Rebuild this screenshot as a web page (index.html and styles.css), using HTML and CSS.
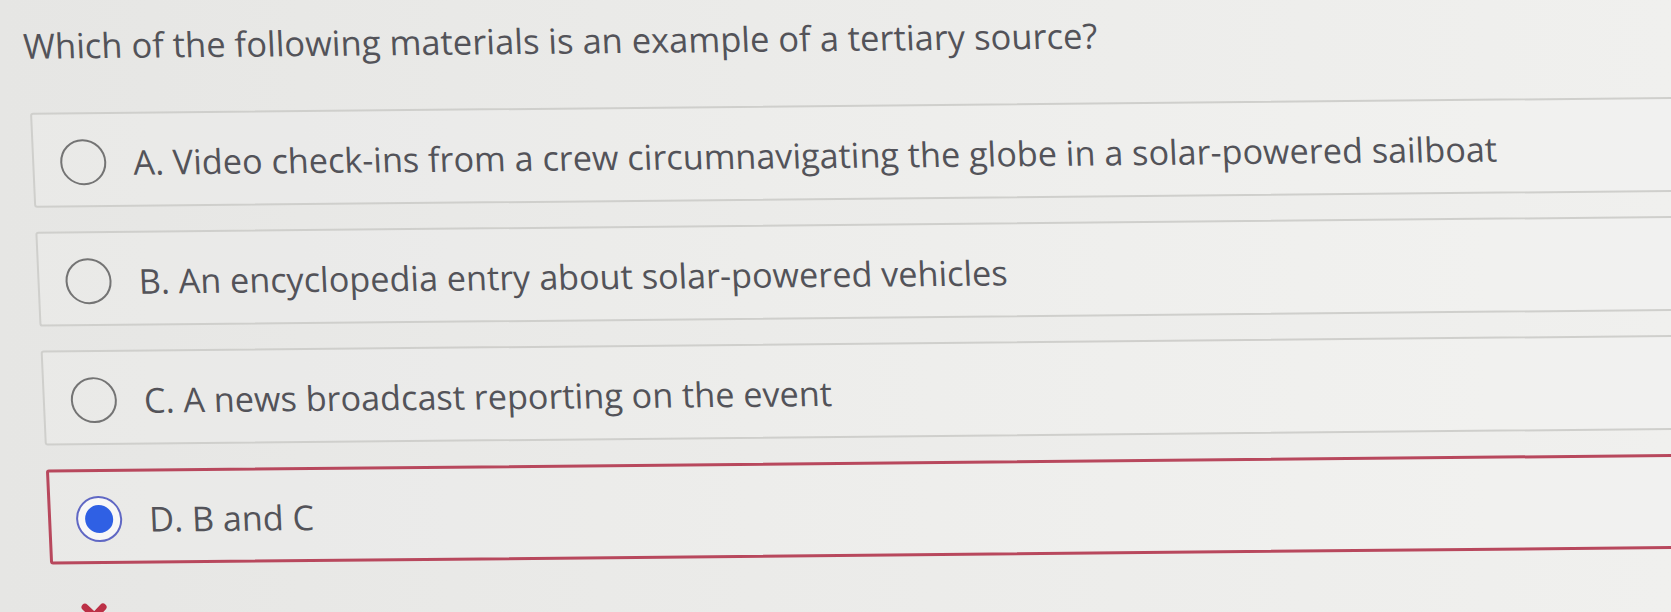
FILE: index.html
```html
<!DOCTYPE html>
<html lang="en">
<head>
<meta charset="utf-8">
<title>Question</title>
<link rel="stylesheet" href="styles.css">
</head>
<body>
<main class="page">
  <h1 class="question">Which of the following materials is an example of a tertiary source?</h1>
  <ul class="options">
    <li class="option">
      <span class="radio"></span>
      <span class="label">A. Video check-ins from a crew circumnavigating the globe in a solar-powered sailboat</span>
    </li>
    <li class="option">
      <span class="radio"></span>
      <span class="label">B. An encyclopedia entry about solar-powered vehicles</span>
    </li>
    <li class="option">
      <span class="radio"></span>
      <span class="label">C. A news broadcast reporting on the event</span>
    </li>
    <li class="option option-selected">
      <span class="radio radio-checked"><span class="dot"></span></span>
      <span class="label">D. B and C</span>
    </li>
  </ul>
  <div class="feedback">
    <svg class="wrong-icon" viewBox="0 0 28 28" width="28" height="28" aria-hidden="true">
      <path d="M5 5 L23 23 M23 5 L5 23" stroke="#bc3046" stroke-width="7" stroke-linecap="round" fill="none"/>
    </svg>
  </div>
</main>
</body>
</html>
```

FILE: styles.css
```css
html, body {
  margin: 0;
  padding: 0;
  height: 100%;
  overflow: hidden;
}

body {
  background: linear-gradient(90deg, #e6e6e4 0%, #ebebe9 45%, #f0f0ee 100%);
  font-family: "Open Sans", "Noto Sans", sans-serif;
  color: #535359;
}

.page {
  width: 1760px;
  padding: 22px 0 0 21px;
  transform-origin: 0 0;
  transform: rotate(-0.55deg) skewX(2deg);
}

.question {
  margin: 0;
  font-size: 34.5px;
  font-weight: 400;
  line-height: 47px;
  color: #535359;
}

.options {
  list-style: none;
  margin: 44px 0 0 4px;
  padding: 0;
  display: flex;
  flex-direction: column;
  gap: 24px;
}

.option {
  display: flex;
  align-items: center;
  gap: 27px;
  height: 95px;
  box-sizing: border-box;
  padding: 4px 0 0 26px;
  border: 2px solid #cfcfcc;
  border-radius: 3px;
  background: rgba(255, 255, 255, 0.12);
  font-size: 34.2px;
  line-height: 46px;
}

.option-selected {
  border: 3px solid #b8485d;
  padding-left: 25px;
}

.radio {
  flex: none;
  width: 42px;
  height: 42px;
  border: 2px solid #747474;
  border-radius: 50%;
  display: flex;
  align-items: center;
  justify-content: center;
}

.radio-checked {
  border: 2px solid #6068c4;
  background: #f7f7f7;
}

.dot {
  width: 28px;
  height: 28px;
  border-radius: 50%;
  background: #2f60e4;
}

.label {
  white-space: nowrap;
}

.feedback {
  margin: 38px 0 0 32px;
  height: 28px;
}

.wrong-icon {
  display: block;
}
```
